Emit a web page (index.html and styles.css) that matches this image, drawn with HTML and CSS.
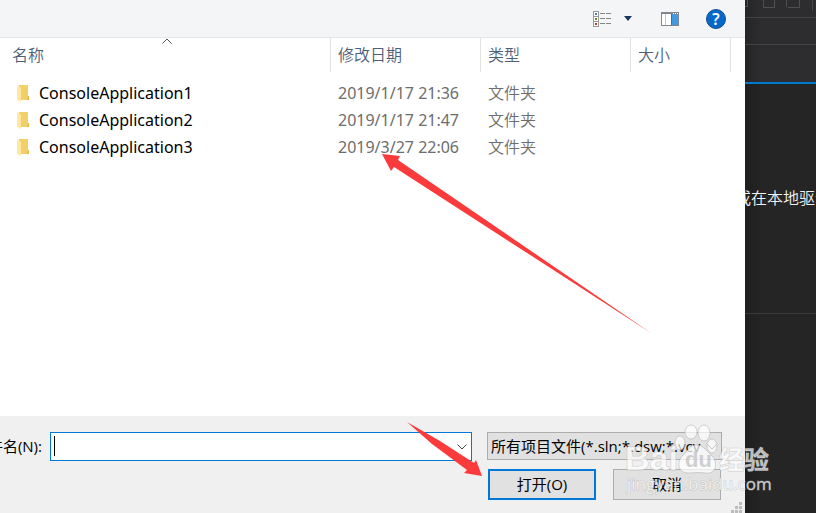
FILE: index.html
```html
<!DOCTYPE html>
<html lang="zh-CN">
<head>
<meta charset="utf-8">
<title>打开项目</title>
<link rel="stylesheet" href="styles.css">
</head>
<body>
<main class="dialog">
  <div class="toolbar">
    <button class="tool" aria-label="更改视图">
      <svg width="18" height="16" viewBox="0 0 18 16" shape-rendering="crispEdges">
        <path d="M.5 .5h5v15h-5zM.5 5.5h5M.5 10.5h5" fill="#fff" stroke="#999"/>
        <path d="M2 2h2v2h-2z" fill="#3f82bd"/><path d="M2 7h2v2h-2z" fill="#718a20"/><path d="M2 12h2v2h-2z" fill="#b13a2a"/>
        <path d="M7 2.500h5M13 2.500h5M7 7.500h5M13 7.500h5M7 12.500h5M13 12.500h5" stroke="#858585"/>
      </svg>
    </button>
    <button class="tool drop" aria-label="更多选项">
      <svg width="8" height="5" viewBox="0 0 8 5"><path d="M0 0h8L4 5z" fill="#17375f"/></svg>
    </button>
    <button class="tool preview" aria-label="预览窗格">
      <svg width="18" height="14" viewBox="0 0 18 14" shape-rendering="crispEdges">
        <path d="M.5 .5h17v13H.5z" fill="#fff" stroke="#80868b"/>
        <path d="M1 1h16v1H1z" fill="#80868b"/><path d="M12 1h1v1h-1zM14 1h1v1h-1zM16 1h1v1h-1z" fill="#fff"/>
        <path d="M4 2h1v11H4z" fill="#c4c8cb"/><path d="M10 2h7v11h-7z" fill="#409be2"/><path d="M10 2h1v11h-1z" fill="#2179bf"/>
      </svg>
    </button>
    <button class="tool help" aria-label="帮助">?</button>
  </div>
  <div class="list">
    <table>
      <colgroup><col><col class="c-date"><col class="c-type"><col class="c-size"><col class="c-rest"></colgroup>
      <thead>
        <tr>
          <th>名称<svg class="sort" width="10" height="6" viewBox="0 0 10 6"><path d="M.5 5.500L5 1l4.500 4.500" fill="none" stroke="#555"/></svg></th>
          <th>修改日期</th><th>类型</th><th>大小</th><td></td>
        </tr>
      </thead>
      <tbody>
        <tr><td><span class="file"><svg class="folder" width="13" height="17" viewBox="0 0 13 17"><path d="M2 0h9v11h1v4H2z" fill="#f3cf67"/><path d="M11 11h1v4h-2z" fill="#e5b94c"/><path d="M0 0l4 3v14l-4-2z" fill="#ffe9a2"/></svg>ConsoleApplication1</span></td><td>2019/1/17 21:36</td><td>文件夹</td><td></td><td></td></tr>
        <tr><td><span class="file"><svg class="folder" width="13" height="17" viewBox="0 0 13 17"><path d="M2 0h9v11h1v4H2z" fill="#f3cf67"/><path d="M11 11h1v4h-2z" fill="#e5b94c"/><path d="M0 0l4 3v14l-4-2z" fill="#ffe9a2"/></svg>ConsoleApplication2</span></td><td>2019/1/17 21:47</td><td>文件夹</td><td></td><td></td></tr>
        <tr><td><span class="file"><svg class="folder" width="13" height="17" viewBox="0 0 13 17"><path d="M2 0h9v11h1v4H2z" fill="#f3cf67"/><path d="M11 11h1v4h-2z" fill="#e5b94c"/><path d="M0 0l4 3v14l-4-2z" fill="#ffe9a2"/></svg>ConsoleApplication3</span></td><td>2019/3/27 22:06</td><td>文件夹</td><td></td><td></td></tr>
      </tbody>
    </table>
  </div>
  <form class="footer">
    <label class="name-label" for="filename"><span>文件名(N):</span></label>
    <div class="combo">
      <input id="filename" type="text">
      <span class="caret"></span>
      <svg class="chevron" width="10" height="6" viewBox="0 0 10 6"><path d="M.5 .5L5 5 9.500 .5" fill="none" stroke="#444"/></svg>
    </div>
    <div class="actions">
      <div class="filter">
        <select aria-label="文件类型"><option>所有项目文件(*.sln;*.dsw;*.vcv</option></select>
        <svg class="chevron" width="10" height="6" viewBox="0 0 10 6"><path d="M.5 .5L5 5 9.500 .5" fill="none" stroke="#444"/></svg>
      </div>
      <div class="buttons">
        <button class="btn primary" type="button">打开(O)</button>
        <button class="btn" type="button">取消</button>
      </div>
    </div>
    <svg class="grip" width="11" height="11" viewBox="0 0 11 11" shape-rendering="crispEdges"><path d="M8 0h3v3H8zM4 4h3v3H4zM8 4h3v3H8zM0 8h3v3H0zM4 8h3v3H4zM8 8h3v3H8z" fill="#bdbdbd"/></svg>
  </form>
</main>
<aside class="ide">
  <div class="ide-tools">
    <svg width="71" height="17" viewBox="0 0 71 17" fill="none" stroke="#505052"><path d="M0 6.500h2.500V0M18.500 0v7.500h11V0M43 7.500h11.500V0M41.500 0v7"/><path d="M67.500 0v11" stroke="#46464a"/></svg>
  </div>
  <div class="ide-bar"></div>
  <div class="ide-tab"></div>
  <div class="ide-body"><p>或在本地驱动器</p></div>
  <div class="ide-end"></div>
</aside>
<svg class="overlay" width="816" height="513" viewBox="0 0 816 513" aria-hidden="true">
  <g fill="#fb3b3b">
    <path d="M382 154L400 156 398 160 651 333 394 167 391 171z"/>
    <path d="M407 422L440 441 474 463 476 460 482 476 464 473 467 470 432 444z"/>
  </g>
  <g class="mark">
    <ellipse cx="680" cy="443" rx="5" ry="7"/><ellipse cx="691" cy="432" rx="6" ry="7"/><ellipse cx="704" cy="433" rx="6" ry="8"/><ellipse cx="712" cy="446" rx="5" ry="7"/>
    <path d="M696 445c-6 0-8 6-13 10-7 7-5 18 5 18 4 0 11-1 17 0 12 2 13-11 7-17-5-5-9-11-16-11z"/>
    <text class="brand" x="625" y="470">Bai</text>
    <text class="du" x="685" y="467">du</text>
    <text class="cn" x="719" y="469">经验</text>
    <text class="url" x="627" y="490">jingyan.baidu.com</text>
  </g>
</svg>
</body>
</html>
```

FILE: styles.css
```css
* { box-sizing: border-box; }

body {
  margin: 0;
  min-height: 100vh;
  display: flex;
  position: relative;
  overflow: hidden;
  font: 16px/27px "Noto Sans", "Noto Sans CJK SC", sans-serif;
  color: #000;
}

button, input, select { font: inherit; color: inherit; margin: 0; }

.dialog { flex: 1; min-width: 0; display: flex; flex-direction: column; background: #fff; }

.toolbar {
  display: flex;
  align-items: center;
  justify-content: flex-end;
  height: 38px;
  padding-right: 19px;
  background: #f4f5f7;
  border-bottom: 1px solid #e6e6e6;
}

.tool { display: flex; padding: 0; border: 0; background: none; }
.drop { margin-left: 13px; }
.preview { margin-left: 29px; }
.help {
  justify-content: center;
  width: 20px;
  height: 20px;
  margin-left: 27px;
  border: 1px solid #174f8c;
  border-radius: 50%;
  background: #0668c8;
  color: #fff;
  font-size: 16px;
  font-weight: 600;
  line-height: 18px;
}

.list { flex: 1; }
table { width: 100%; table-layout: fixed; border-collapse: separate; border-spacing: 0; }
.c-date, .c-type { width: 150px; }
.c-size { width: 100px; }
.c-rest { width: 14px; }

th {
  position: relative;
  height: 34px;
  padding: 0 0 0 7px;
  border-right: 1px solid #e2e2e2;
  color: #4c607a;
  font-weight: 350;
  text-align: left;
}
th:first-child { padding-left: 12px; }
.sort { position: absolute; left: calc(50% - 3px); top: 0; }

td { padding: 0 0 0 7px; height: 27px; color: #6d6d6d; white-space: nowrap; }
td:nth-child(3) { font-weight: 350; }
thead td { height: 34px; }
tbody::before { content: ""; display: block; height: 8px; }
tbody td:first-child { padding-left: 17px; color: #000; }
.file { display: flex; align-items: center; gap: 9px; }

.footer {
  position: relative;
  display: grid;
  grid-template-columns: 50px 1fr 235px;
  align-items: start;
  padding: 16px 23px 13px 0;
  background: #f0f0f0;
  font-family: "Open Sans", "Noto Sans CJK SC", sans-serif;
  font-size: 15px;
}

.name-label { display: flex; justify-content: flex-end; overflow: hidden; padding-right: 8px; line-height: 29px; white-space: nowrap; }
.combo, .filter { position: relative; }
.combo { margin-right: 15px; }
.combo input { display: block; width: 100%; height: 29px; padding: 0 24px 0 4px; border: 1px solid #0078d7; border-radius: 0; background: #fff; }
.caret { position: absolute; left: 4px; top: 4px; width: 1px; height: 20px; background: #000; }
.chevron { position: absolute; right: 5px; top: 12px; pointer-events: none; }

.filter select {
  display: block;
  appearance: none;
  width: 100%;
  height: 28px;
  padding: 0 20px 0 3px;
  border: 1px solid #adadad;
  border-radius: 0;
  background: #e1e1e1;
}

.buttons { display: grid; grid-template-columns: 1fr 1fr; gap: 17px; padding: 9px 1px 0; }
.btn { height: 31px; padding: 0; border: 1px solid #adadad; background: #e1e1e1; line-height: 27px; }
.primary { border: 2px solid #0078d7; }
.grip { position: absolute; right: 3px; bottom: 0; }

.ide {
  display: flex;
  flex-direction: column;
  width: 71px;
  background: linear-gradient(90deg, #00000030, #00000000 18px), #252526;
  color: #f1f1f1;
}
.ide-tools, .ide-bar, .ide-tab { background: linear-gradient(90deg, #00000030, #00000000 18px), #2d2d30; border-bottom: 1px solid #434346; }
.ide-tools { height: 18px; }
.ide-tools svg { display: block; }
.ide-bar { height: 27px; }
.ide-tab { height: 39px; border-bottom: 2px solid #007acc; }
.ide-body { display: flex; justify-content: flex-start; height: 230px; padding-top: 101px; overflow: hidden; border-bottom: 1px solid #3a3a3c; }
.ide-body p { margin: 0 0 0 -10px; white-space: nowrap; font-weight: 350; }
.ide-end { flex: 1; }

.overlay { position: absolute; left: 0; top: 0; pointer-events: none; }
.mark { fill: #fff; fill-opacity: .7; stroke: #aaa; stroke-opacity: .5; stroke-width: 1; }
.mark text { paint-order: stroke; }
.brand { font: 700 34px "Liberation Sans", sans-serif; }
.du { font: 700 22px "Liberation Sans", sans-serif; fill: #bcbcbc; stroke: none; }
.cn { font: 700 25px "Noto Sans CJK SC", sans-serif; }
.url { font: 400 17px "Open Sans", sans-serif; }
```
